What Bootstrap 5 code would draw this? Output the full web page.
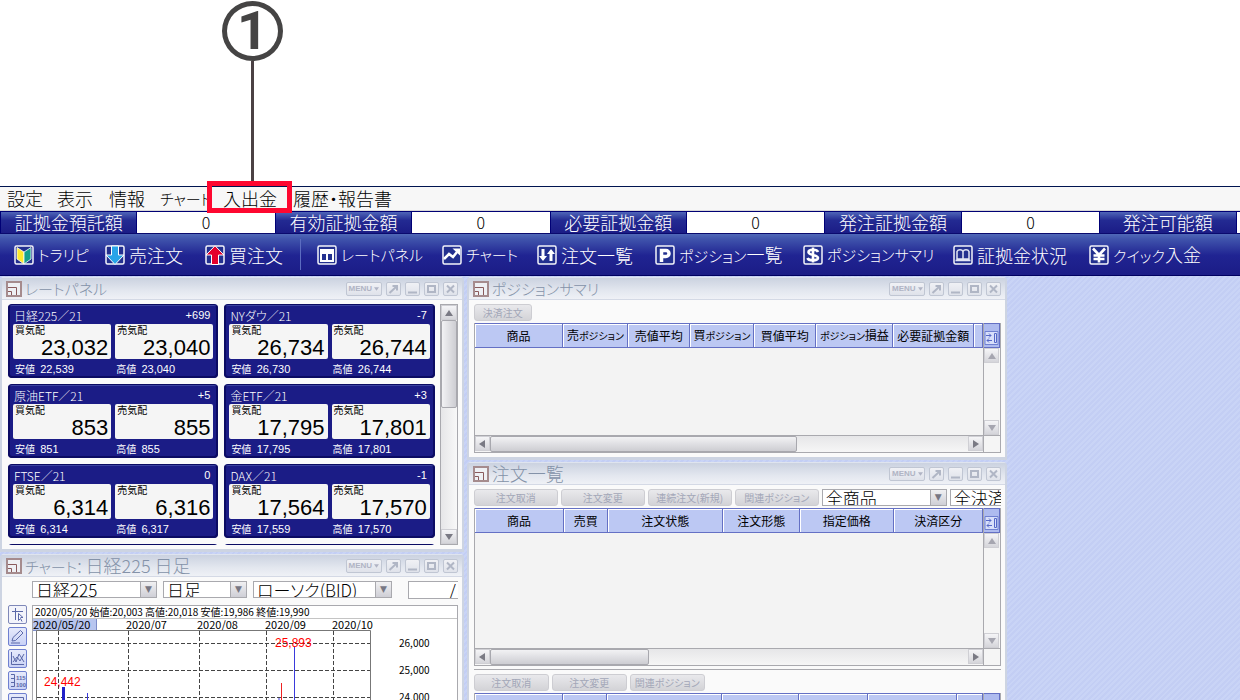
<!DOCTYPE html>
<html lang="ja">
<head>
<meta charset="utf-8">
<meta name="viewport" content="width=device-width, initial-scale=1">
<title>トレード画面</title>
<link href="https://cdn.jsdelivr.net/npm/bootstrap@5.3.0/dist/css/bootstrap.min.css" rel="stylesheet">
<style>
:root{--navy:#1b1c86;--edge:#cdd4e2;--line:#a9a9ae;--head:#bcc8f3;--headline:#6470c4}
html,body{height:100%}
body{font-family:"Noto Sans CJK JP",sans-serif;font-weight:300;font-feature-settings:"palt";font-size:18px;line-height:20px;color:#000;background:#fff;overflow:hidden;white-space:nowrap}
button,select,input{font:inherit;font-feature-settings:inherit;color:inherit}
.kana{font-size:15px}
/* callout */
.callout-area{height:186px;padding:1px 0 0 222px}
.callout-no{width:61px;height:60px;border:5px solid #454444;border-radius:50%;font:700 54px/50px Roboto,sans-serif;color:#454444;text-align:center}
.callout-stem{width:3px;height:125px;margin-left:29px;background:#4b4144}
/* menu bar */
.menubar{display:grid;grid-template-columns:50px 52px 51px 63px 70px auto;height:25px;padding-left:7px;border-top:1px solid #001450;border-bottom:1px solid #d8d8d8;background:#f7f7f7}
.menubar a{color:#000;text-decoration:none;line-height:23px}
.menubar .marked::before{content:"";position:absolute;z-index:3;left:-16px;top:-6px;width:85px;height:32px;border:5px solid #fe0730}
/* account strip */
.strip{height:23px;background:#0a0a6e;border-top:1px solid #000075}
.strip>*{flex:0 0 11.08%;text-align:center;line-height:21px;height:21px}
.strip dt{font-weight:300;color:#fff;background:linear-gradient(#4f65b8,#232a92 40%,#1b1c86);border-left:1px solid #000075;border-right:1px solid #000075}
.strip dd{background:#fff;margin:0;font-size:16px}
.strip dd:last-child{flex:1 1 0;min-width:0}
/* toolbar */
.toolbar{display:grid;grid-template-columns:91fr 100fr 112fr 125fr 95fr 118fr 148fr 150fr 136fr 151fr;height:42px;padding-left:14px;border-bottom:1px solid #000060;background:linear-gradient(#5068b8,#4054ac 12%,#202492 52%,#1b1c86)}
.toolbar button{display:flex;align-items:center;gap:4px;padding:0;border:0;background:none;color:#fff;min-width:0}
.toolbar svg{width:20px;height:20px;flex:none}
.toolbar .parted{position:relative}
.toolbar .parted::after{content:"";position:absolute;right:16px;top:5px;bottom:5px;width:1px;background:#5c6cc0}
/* desktop and windows */
.desk{flex:1 1 0;min-height:0;gap:3px;overflow:hidden;padding-top:1px;background:repeating-linear-gradient(135deg,#c3cef4 0 2px,#c9d4f6 2px 4px)}
.desk-left{width:37.4%;gap:2px}
.desk-right{width:43.6%;gap:2px}
.win{border:1px solid #dfe4ee;border-left:2px solid var(--edge);border-right:2px solid var(--edge);border-bottom:3px solid var(--edge);border-radius:4px 4px 0 0;background:#fafafa}
.win-title{height:22px;padding:0 0 0 4px;border-bottom:1px solid #d4d9e5;background:linear-gradient(#cbd2e0,#e3e7ef 60%,#eff1f6);color:#8492a8}
.win-title h2{font-size:18px;font-weight:300;line-height:21px;margin:0 auto 0 3px}
.win-title h2.kana{font-size:15px}
.win-title .logo{width:16px;height:16px}
.wbtn{width:15px;height:14px;padding:0;border:1px solid #c0c6d3;border-radius:2px;background:linear-gradient(#f0f1f5,#dfe2ea);display:flex;align-items:center;justify-content:center}
.wbtn svg{width:11px;height:10px}
.wbtn-menu{width:36px;font:700 8px/12px "Liberation Sans",sans-serif;color:#b0b4c4;gap:2px}
.wbtn .caret{width:5px;fill:#b0b4c4}
/* scroll bars */
.sbar{background:linear-gradient(90deg,#e6e6e8,#f8f8f8);border:1px solid var(--line)}
.sbar-h{background:linear-gradient(#e6e6e8,#f6f6f6)}
.sb-arrow{width:15px;height:15px;flex:none;background:linear-gradient(#f5f5f7,#d5d5da);display:flex;align-items:center;justify-content:center;border:1px solid #cfcfd4;padding:0}
.sb-arrow svg{width:8px;height:8px;fill:#7a7a84}
.pale svg{fill:#a6a6b0}
.sb-thumb{background:linear-gradient(90deg,#f2f2f4,#cdcdd2);border:1px solid #a8a8ae;border-radius:2px}
.sbar-h .sb-thumb{background:linear-gradient(#f2f2f4,#cdcdd2)}
/* rates */
.rates-row{gap:5px;padding:4px 4px 4px 6px}
.rates{height:241px;overflow:hidden;display:grid;grid-template-columns:1fr 1fr;gap:6px;align-content:start;flex:1 1 0;min-width:0}
.rate{height:74px;padding:1px 3px;border:2px solid #0b0b63;border-top-color:#3c44a0;outline:1px solid #0b0b63;outline-offset:-1px;border-radius:4px;background:var(--navy);color:#fff;font-size:11px;line-height:17px}
.rate header{height:17px;font-size:12px;padding:0 3px 0 1px}
.rate .num{font-family:"Liberation Sans",sans-serif;font-size:11px;font-weight:400}
.rate .lo{padding-left:2px;line-height:19px;font-size:10px;font-weight:400}
.rate .lo .num{margin-left:3px}
.quote{height:35px;border:0;border-radius:2px;background:#f5f5f5;color:#000;padding:0 3px 0 2px;text-align:left;font-size:10px;line-height:12px;font-weight:400}
.quote b{display:block;text-align:right;font:400 22px/24px "Liberation Sans",sans-serif}
.vbar{width:18px;height:241px}
/* drop-downs */
.drop{position:relative;border:1px solid var(--line);background:#fff;height:17px;overflow:hidden;flex:none}
.drop select{appearance:none;border:0;background:#fff;width:100%;height:15px;padding:0 18px 0 3px;line-height:15px;font-size:17px;display:block}
.drop::after{content:"▼";position:absolute;right:0;top:0;width:16px;height:15px;background:linear-gradient(#f0f0f2,#cfcfd6);border-left:1px solid var(--line);font:9px/15px "DejaVu Sans",sans-serif;color:#777783;text-align:center;pointer-events:none}
.d-84{width:84px}.d-125{width:125px}.d-139{width:139px}
.qty{width:50px;height:18px;border:1px solid var(--line);border-right:0;padding:0 2px;text-align:right;line-height:16px;background:#fff;border-radius:0}
/* chart */
.chart-pick{gap:6px;padding:4px 4px 0 30px}
.chart-row{gap:5px;padding:6px 4px 0 6px}
.tools{gap:3px}
.tool{width:19px;height:19px;padding:0;border:1px solid #6f80d0;border-radius:2px;background:linear-gradient(#e6eafb,#c9d2f6);display:block;flex:none}
.tool svg{display:block;width:17px;height:17px;fill:none;stroke:#5a68a8}
.tool.active{background:#f3f4fb;border-color:#7f88b8}
.chart-box{border:1px solid var(--line);background:#fff;height:160px;overflow:hidden;flex:1 1 0;min-width:0}
.ohlc{height:13px;line-height:12px;font-size:10px;font-weight:400;padding-left:2px;border-bottom:1px solid #c4c4c4}
.chart-box svg{display:block}
.chart-box text{font-family:"Noto Sans CJK JP",sans-serif;font-weight:400}
.chart-box .peak{font-family:"Liberation Sans",sans-serif}
/* tables */
.pane{padding:4px 4px 4px 5px}
.pane-btns{gap:3px;margin-bottom:2px}
.gbtn{height:17px;width:84px;padding:0;border:1px solid #cdcdd2;border-radius:3px;background:linear-gradient(#e9e9ec,#d3d3d7);color:#a3a7b8;font-size:10px;line-height:15px;font-weight:400;flex:none}
.gbtn-s{width:75px}
.gbtn-1{width:58px}
.grid-box{display:grid;grid-template-columns:minmax(0,1fr) 17px;border:1px solid var(--line);border-top:0}
.sheet{background:#f3f3f3}
.sheet table{table-layout:fixed;width:100%;border-collapse:separate;border-spacing:0}
.sheet th{height:25px;border:1px solid var(--headline);border-left:0;box-shadow:inset 1px 1px 0 #fff;background:var(--head);font-size:12px;font-weight:400;line-height:22px;padding:0;text-align:center;overflow:hidden}
.c9{width:9px}.c26{width:26px}.c44{width:44px}.c62{width:62px}.c64{width:64px}.c65{width:65px}.c69{width:69px}.c77{width:77px}.c81{width:81px}.c89{width:89px}.c94{width:94px}.c115{width:115px}
.sheet th .kana{font-size:10px}
.sheet-low{height:112px}.sheet-mid{height:140px}
.side{border-left:1px solid var(--line);background:#f5f5f5}
.cfg{height:25px;width:16px;padding:5px 0 0;border:1px solid var(--headline);border-left:0;background:#aebbef;display:block;flex:none}
.cfg svg{display:block;width:15px;height:16px}
.hrow{grid-column:1;height:17px}
.corner{border-left:1px solid var(--line);border-top:1px solid var(--line);background:#f5f5f5}
.rule{height:1px;margin:3px 0 4px;background:var(--line)}
</style>
</head>
<body class="d-flex flex-column">
<svg width="0" height="0" class="position-absolute" aria-hidden="true">
  <symbol id="logo" viewBox="0 0 16 16"><path d="M1 1h14v14H1z" fill="#eef0f4" stroke="#a58b8d" stroke-width="2"/><path d="M2 6.500h8.500V14M5.500 14v-3.500H2" fill="none" stroke="#8a5a5c"/></symbol>
  <symbol id="w-pop" viewBox="0 0 11 10"><path d="M1.500 9 8 3M4.500 2H9v4.500" fill="none" stroke="#b0b6c5" stroke-width="2"/></symbol>
  <symbol id="w-min" viewBox="0 0 11 10"><path d="M1 8.500h9" stroke="#b0b6c5" stroke-width="2"/></symbol>
  <symbol id="w-max" viewBox="0 0 11 10"><path d="M2 2h7v6H2z" fill="none" stroke="#b0b6c5" stroke-width="2"/></symbol>
  <symbol id="w-x" viewBox="0 0 11 10"><path d="m2 1.500 7 7m0-7-7 7" stroke="#b0b6c5" stroke-width="2"/></symbol>
  <symbol id="up" viewBox="0 0 8 8"><path d="M4 1 8 7H0z"/></symbol>
  <symbol id="down" viewBox="0 0 8 8"><path d="M4 7 8 1H0z"/></symbol>
  <symbol id="left" viewBox="0 0 8 8"><path d="M1 4 7 0v8z"/></symbol>
  <symbol id="right" viewBox="0 0 8 8"><path d="M7 4 1 0v8z"/></symbol>
  <symbol id="frame" viewBox="0 0 20 20"><rect x="1" y="1" width="18" height="18" rx="1.500" fill="#23308f" stroke="#f4f4fa" stroke-width="1.500"/></symbol>
  <symbol id="cfg" viewBox="0 0 15 16"><path d="M1 1.500h13v13H1z" fill="#d8dffa" stroke="#6f80d0"/><path d="M10.500 3.500h2v9h-2zM2 5.500h5M5 3.500l2 2-2 2M8 10.500H3M5 8.500l-2 2 2 2" fill="none" stroke="#5568c8"/></symbol>
</svg>

<div class="callout-area flex-shrink-0">
  <div class="callout-no">1</div>
  <div class="callout-stem"></div>
</div>

<nav class="menubar flex-shrink-0" aria-label="メニュー">
  <a href="#">設定</a><a href="#">表示</a><a href="#">情報</a><a href="#" class="kana">チャート</a><a href="#" class="marked position-relative">入出金</a><a href="#">履歴・報告書</a>
</nav>

<dl class="strip d-flex m-0 flex-shrink-0">
  <dt>証拠金預託額</dt><dd>0</dd><dt>有効証拠金額</dt><dd>0</dd><dt>必要証拠金額</dt><dd>0</dd><dt>発注証拠金額</dt><dd>0</dd><dt>発注可能額</dt><dd></dd>
</dl>

<div class="toolbar flex-shrink-0" role="toolbar">
  <button class="kana"><svg viewBox="0 0 20 20"><use href="#frame"/><path d="M3 2.500 10 7v12L3 14z" fill="#ffe92e" stroke="#fff" stroke-width=".8"/><path d="M17 2.500 10 7v12l7-5z" fill="#16a18c" stroke="#fff" stroke-width=".8"/></svg>トラリピ</button>
  <button><svg viewBox="0 0 20 20"><use href="#frame"/><path d="M6.500 1h7v9H19l-9 9.500L1 10h5.500z" fill="#28a4e8" stroke="#fff"/></svg>売注文</button>
  <button class="parted"><svg viewBox="0 0 20 20"><use href="#frame"/><path d="M6.500 19.500h7V10H19L10 .8 1 10h5.500z" fill="#e4002c" stroke="#fff"/></svg>買注文</button>
  <button class="kana"><svg viewBox="0 0 20 20"><use href="#frame"/><path d="M3 4h14v13H3z" fill="#fff"/><path d="M5 9h4v6H5zM11 9h4v6h-4z" fill="#23308f"/></svg>レートパネル</button>
  <button class="kana"><svg viewBox="0 0 20 20"><use href="#frame"/><path d="m2 14 5-5 4 3 4-5" fill="none" stroke="#fff" stroke-width="2.500"/><path d="M10.500 3.500H18v7z" fill="#fff"/></svg>チャート</button>
  <button><svg viewBox="0 0 20 20"><use href="#frame"/><path d="M4.500 4h3v7H10l-4 5-4-5h2.500zM12.500 16h3V9H18l-4-5-4 5h2.500z" fill="#fff"/></svg>注文一覧</button>
  <button><svg viewBox="0 0 20 20"><use href="#frame"/><path d="M6.500 17V5.500H11a3 3 0 0 1 0 6H6.500" fill="none" stroke="#fff" stroke-width="3.500"/></svg><span><span class="kana">ポジション</span>一覧</span></button>
  <button class="kana"><svg viewBox="0 0 20 20"><use href="#frame"/><path d="M15 7C14 4 5.500 4 5.500 7.200S15 9.800 15 13 5.500 16 4.500 13M10 2.500v15" fill="none" stroke="#fff" stroke-width="2.600"/></svg>ポジションサマリ</button>
  <button><svg viewBox="0 0 20 20"><use href="#frame"/><path d="M4 14V6.500C5 4 9 4 10 6.500 11 4 15 4 16 6.500V14h-6zM10 6.500V14M2.500 15.500h15" fill="none" stroke="#e2e5f4" stroke-width="1.500"/></svg>証拠金状況</button>
  <button><svg viewBox="0 0 20 20"><use href="#frame"/><path d="m4 3.500 6 6.500 6-6.500M10 10v7.500M4.500 10.500h11M4.500 14h11" fill="none" stroke="#fff" stroke-width="2.600"/></svg><span><span class="kana">クイック</span>入金</span></button>
</div>

<main class="desk d-flex">
  <div class="desk-left d-flex flex-column">
    <section class="win">
      <div class="win-title d-flex align-items-center">
        <svg class="logo"><use href="#logo"/></svg><h2 class="kana">レートパネル</h2>
        <div class="d-flex gap-1 me-1">
          <button class="wbtn wbtn-menu">MENU<svg class="caret" viewBox="0 0 6 6"><path d="M0 1h6L3 5z"/></svg></button>
          <button class="wbtn" aria-label="切離し"><svg><use href="#w-pop"/></svg></button><button class="wbtn" aria-label="最小化"><svg><use href="#w-min"/></svg></button><button class="wbtn" aria-label="最大化"><svg><use href="#w-max"/></svg></button><button class="wbtn" aria-label="閉じる"><svg><use href="#w-x"/></svg></button>
        </div>
      </div>
      <div class="d-flex rates-row">
        <div class="rates">
          <article class="rate"><header class="d-flex justify-content-between"><span>日経225／21</span><span class="num">+699</span></header>
            <div class="row g-1"><div class="col-6"><button class="quote w-100">買気配<b>23,032</b></button></div><div class="col-6"><button class="quote w-100">売気配<b>23,040</b></button></div></div>
            <div class="row gx-1 lo"><div class="col-6">安値 <span class="num">22,539</span></div><div class="col-6">高値 <span class="num">23,040</span></div></div></article>
          <article class="rate"><header class="d-flex justify-content-between"><span>NYダウ／21</span><span class="num">-7</span></header>
            <div class="row g-1"><div class="col-6"><button class="quote w-100">買気配<b>26,734</b></button></div><div class="col-6"><button class="quote w-100">売気配<b>26,744</b></button></div></div>
            <div class="row gx-1 lo"><div class="col-6">安値 <span class="num">26,730</span></div><div class="col-6">高値 <span class="num">26,744</span></div></div></article>
          <article class="rate"><header class="d-flex justify-content-between"><span>原油ETF／21</span><span class="num">+5</span></header>
            <div class="row g-1"><div class="col-6"><button class="quote w-100">買気配<b>853</b></button></div><div class="col-6"><button class="quote w-100">売気配<b>855</b></button></div></div>
            <div class="row gx-1 lo"><div class="col-6">安値 <span class="num">851</span></div><div class="col-6">高値 <span class="num">855</span></div></div></article>
          <article class="rate"><header class="d-flex justify-content-between"><span>金ETF／21</span><span class="num">+3</span></header>
            <div class="row g-1"><div class="col-6"><button class="quote w-100">買気配<b>17,795</b></button></div><div class="col-6"><button class="quote w-100">売気配<b>17,801</b></button></div></div>
            <div class="row gx-1 lo"><div class="col-6">安値 <span class="num">17,795</span></div><div class="col-6">高値 <span class="num">17,801</span></div></div></article>
          <article class="rate"><header class="d-flex justify-content-between"><span>FTSE／21</span><span class="num">0</span></header>
            <div class="row g-1"><div class="col-6"><button class="quote w-100">買気配<b>6,314</b></button></div><div class="col-6"><button class="quote w-100">売気配<b>6,316</b></button></div></div>
            <div class="row gx-1 lo"><div class="col-6">安値 <span class="num">6,314</span></div><div class="col-6">高値 <span class="num">6,317</span></div></div></article>
          <article class="rate"><header class="d-flex justify-content-between"><span>DAX／21</span><span class="num">-1</span></header>
            <div class="row g-1"><div class="col-6"><button class="quote w-100">買気配<b>17,564</b></button></div><div class="col-6"><button class="quote w-100">売気配<b>17,570</b></button></div></div>
            <div class="row gx-1 lo"><div class="col-6">安値 <span class="num">17,559</span></div><div class="col-6">高値 <span class="num">17,570</span></div></div></article>
          <article class="rate"></article><article class="rate"></article>
        </div>
        <div class="sbar vbar d-flex flex-column">
          <button class="sb-arrow w-100" aria-label="上へ"><svg><use href="#up"/></svg></button>
          <div class="sb-thumb" style="height:37%"></div>
          <button class="sb-arrow w-100 mt-auto" aria-label="下へ"><svg><use href="#down"/></svg></button>
        </div>
      </div>
    </section>

    <section class="win">
      <div class="win-title d-flex align-items-center">
        <svg class="logo"><use href="#logo"/></svg><h2><span class="kana">チャート</span>: 日経225 日足</h2>
        <div class="d-flex gap-1 me-1">
          <button class="wbtn wbtn-menu">MENU<svg class="caret" viewBox="0 0 6 6"><path d="M0 1h6L3 5z"/></svg></button>
          <button class="wbtn" aria-label="切離し"><svg><use href="#w-pop"/></svg></button><button class="wbtn" aria-label="最小化"><svg><use href="#w-min"/></svg></button><button class="wbtn" aria-label="最大化"><svg><use href="#w-max"/></svg></button><button class="wbtn" aria-label="閉じる"><svg><use href="#w-x"/></svg></button>
        </div>
      </div>
      <div class="chart-pick d-flex">
        <div class="drop d-125"><select aria-label="商品"><option>日経225</option></select></div>
        <div class="drop d-84"><select aria-label="足種"><option>日足</option></select></div>
        <div class="drop d-139"><select aria-label="表示形式"><option>ローソク(BID)</option></select></div>
        <input class="qty ms-auto" aria-label="期間" value="/">
      </div>
      <div class="chart-row d-flex">
        <div class="d-flex flex-column tools">
          <button class="tool active" aria-label="カーソル"><svg viewBox="0 0 17 17"><path d="M3 5.500h11M6.500 2v12"/><path d="M9.500 7.500v7l2-2 1.500 3M9.500 7.500l4.500 4h-2.500"/></svg></button>
          <button class="tool" aria-label="描画"><svg viewBox="0 0 17 17"><path d="m3 13 1-3.500 7.500-7 2.500 2.500-7.500 7.500zM2 15h9"/></svg></button>
          <button class="tool" aria-label="指標"><svg viewBox="0 0 17 17"><path d="M2.500 2v12.500H15M4 6l3 6 3-8 2 3 3 5M4 12l4-5 3 4 4-7"/></svg></button>
          <button class="tool" aria-label="目盛"><svg viewBox="0 0 17 17"><path d="M2 2.500h3.500v12H2M2 6.500h3M2 10.500h3"/><g font-size="6" font-weight="700" fill="#5a68a8" stroke="none" font-family="Liberation Sans"><text x="7" y="8">115</text><text x="7" y="15">100</text></g></svg></button>
          <button class="tool" aria-label="表示"><svg viewBox="0 0 17 17"><path d="M2.500 3.500h12v11h-12zM5 7h7v5H5z"/></svg></button>
        </div>
        <div class="chart-box">
          <div class="ohlc">2020/05/20 始値:20,003 高値:20,018 安値:19,986 終値:19,990</div>
          <svg width="424" height="84" viewBox="0 0 424 84">
            <path d="M0 0h63v11H0z" fill="#b7c5ef"/><path d="M63.500 0v12M0 11.500h64" stroke="#7c8cc8"/>
            <g font-size="11"><text x="0" y="10">2020/05/20</text><text x="93" y="10">2020/07</text><text x="164" y="10">2020/08</text><text x="232" y="10">2020/09</text><text x="299" y="10">2020/10</text></g>
            <path d="M3.500 84V11.500h334V84" fill="none" stroke="#777"/>
            <path d="M4 24.500h333M4 51.500h333M4 78.500h333M25.500 12v72M95.500 12v72M166.500 12v72M233.500 12v72M300.500 12v72" fill="none" stroke="#444" stroke-dasharray="4 2"/>
            <path d="M54.500 74v10M261.500 28v56M246 79v5" stroke="#3a3adb" fill="none"/><path d="M29 68h3v16h-3z" fill="#2020c8"/>
            <path d="M248.500 64v20" stroke="#e22"/>
            <g fill="#f00" font-size="12"><text class="peak" x="11" y="67">24,442</text><text class="peak" x="242" y="28">25,893</text></g>
            <g font-size="10"><text x="366" y="28">26,000</text><text x="366" y="55">25,000</text><text x="366" y="82">24,000</text></g>
          </svg>
        </div>
      </div>
    </section>
  </div>

  <div class="desk-right d-flex flex-column">
    <section class="win">
      <div class="win-title d-flex align-items-center">
        <svg class="logo"><use href="#logo"/></svg><h2 class="kana">ポジションサマリ</h2>
        <div class="d-flex gap-1 me-1">
          <button class="wbtn wbtn-menu">MENU<svg class="caret" viewBox="0 0 6 6"><path d="M0 1h6L3 5z"/></svg></button>
          <button class="wbtn" aria-label="切離し"><svg><use href="#w-pop"/></svg></button><button class="wbtn" aria-label="最小化"><svg><use href="#w-min"/></svg></button><button class="wbtn" aria-label="最大化"><svg><use href="#w-max"/></svg></button><button class="wbtn" aria-label="閉じる"><svg><use href="#w-x"/></svg></button>
        </div>
      </div>
      <div class="pane">
        <div class="d-flex pane-btns"><button class="gbtn gbtn-1">決済注文</button></div>
        <div class="grid-box">
          <div class="sheet sheet-low"><table>
            <thead><tr><th>商品</th><th class="c65">売<span class="kana">ポジション</span></th><th class="c62">売値平均</th><th class="c64">買<span class="kana">ポジション</span></th><th class="c62">買値平均</th><th class="c77"><span class="kana">ポジション</span>損益</th><th class="c81">必要証拠金額</th><th class="c9"></th></tr></thead>
          </table></div>
          <div class="side d-flex flex-column pale"><button class="cfg" aria-label="列設定"><svg><use href="#cfg"/></svg></button><button class="sb-arrow" aria-label="上へ"><svg><use href="#up"/></svg></button><button class="sb-arrow mt-auto" aria-label="下へ"><svg><use href="#down"/></svg></button></div>
          <div class="sbar sbar-h hrow d-flex border-start-0 border-end-0 border-bottom-0"><button class="sb-arrow" aria-label="左へ"><svg><use href="#left"/></svg></button><div class="sb-thumb" style="width:60.4%"></div><button class="sb-arrow ms-auto" aria-label="右へ"><svg><use href="#right"/></svg></button></div>
          <div class="corner"></div>
        </div>
      </div>
    </section>

    <section class="win">
      <div class="win-title d-flex align-items-center">
        <svg class="logo"><use href="#logo"/></svg><h2>注文一覧</h2>
        <div class="d-flex gap-1 me-1">
          <button class="wbtn wbtn-menu">MENU<svg class="caret" viewBox="0 0 6 6"><path d="M0 1h6L3 5z"/></svg></button>
          <button class="wbtn" aria-label="切離し"><svg><use href="#w-pop"/></svg></button><button class="wbtn" aria-label="最小化"><svg><use href="#w-min"/></svg></button><button class="wbtn" aria-label="最大化"><svg><use href="#w-max"/></svg></button><button class="wbtn" aria-label="閉じる"><svg><use href="#w-x"/></svg></button>
        </div>
      </div>
      <div class="pane">
        <div class="d-flex pane-btns overflow-hidden"><button class="gbtn">注文取消</button><button class="gbtn">注文変更</button><button class="gbtn">連続注文(新規)</button><button class="gbtn">関連ポジション</button>
          <div class="drop d-125"><select aria-label="商品"><option>全商品</option></select></div>
          <div class="drop d-125"><select aria-label="決済区分"><option>全決済区分</option></select></div></div>
        <div class="grid-box">
          <div class="sheet sheet-mid"><table>
            <thead><tr><th>商品</th><th class="c44">売買</th><th class="c115">注文状態</th><th class="c77">注文形態</th><th class="c94">指定価格</th><th class="c89">決済区分</th></tr></thead>
          </table></div>
          <div class="side d-flex flex-column pale"><button class="cfg" aria-label="列設定"><svg><use href="#cfg"/></svg></button><button class="sb-arrow" aria-label="上へ"><svg><use href="#up"/></svg></button><button class="sb-arrow mt-auto" aria-label="下へ"><svg><use href="#down"/></svg></button></div>
          <div class="sbar sbar-h hrow d-flex border-start-0 border-end-0 border-bottom-0"><button class="sb-arrow" aria-label="左へ"><svg><use href="#left"/></svg></button><div class="sb-thumb" style="width:31.4%"></div><button class="sb-arrow ms-auto" aria-label="右へ"><svg><use href="#right"/></svg></button></div>
          <div class="corner"></div>
        </div>
        <div class="rule"></div>
        <div class="d-flex pane-btns"><button class="gbtn gbtn-s">注文取消</button><button class="gbtn gbtn-s">注文変更</button><button class="gbtn gbtn-s">関連ポジション</button></div>
        <div class="grid-box">
          <div class="sheet sheet-mid"><table>
            <thead><tr><th>商品</th><th class="c44">売買</th><th class="c115">注文状態</th><th class="c77">注文形態</th><th class="c69"></th><th class="c89"></th><th class="c26"></th></tr></thead>
          </table></div>
          <div class="side"><button class="cfg" aria-label="列設定"><svg><use href="#cfg"/></svg></button></div>
        </div>
      </div>
    </section>
  </div>
</main>
<script src="https://cdn.jsdelivr.net/npm/bootstrap@5.3.0/dist/js/bootstrap.bundle.min.js"></script>
</body>
</html>
